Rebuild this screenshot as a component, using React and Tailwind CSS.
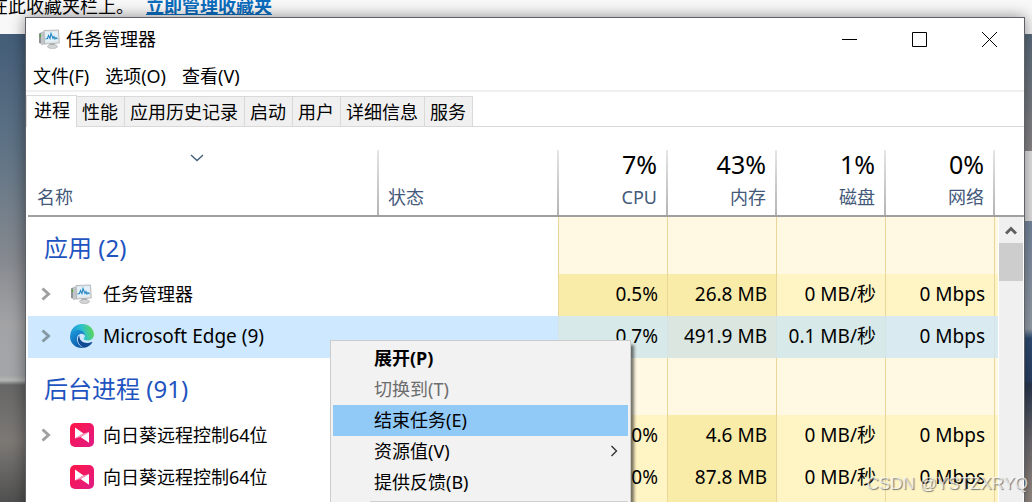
import React from 'react';
import clsx from 'clsx';

const tabs = ['进程', '性能', '应用历史记录', '启动', '用户', '详细信息', '服务'];

const columns = [
  { label: 'CPU', usage: '7%' },
  { label: '内存', usage: '43%' },
  { label: '磁盘', usage: '1%' },
  { label: '网络', usage: '0%' },
];

const LOW = 'bg-[#fff4c4]';
const MID = 'bg-[#f9eca8]';

const groups = [
  {
    title: '应用 (2)',
    rows: [
      { name: '任务管理器', icon: 'taskmgr', expandable: true, values: ['0.5%', '26.8 MB', '0 MB/秒', '0 Mbps'], heat: [MID, MID, LOW, LOW] },
      {
        name: 'Microsoft Edge (9)',
        icon: 'edge',
        expandable: true,
        selected: true,
        nameClass: 'text-[19px]',
        values: ['0.7%', '491.9 MB', '0.1 MB/秒', '0 Mbps'],
        heat: ['bg-[#d7e9e8]', 'bg-[#dae6df]', 'bg-[#d7e9e8]', 'bg-[#d9eaf0]'],
      },
    ],
  },
  {
    title: '后台进程 (91)',
    rows: [
      { name: '向日葵远程控制64位', icon: 'sunlogin', expandable: true, values: ['0%', '4.6 MB', '0 MB/秒', '0 Mbps'], heat: [LOW, MID, LOW, LOW] },
      { name: '向日葵远程控制64位', icon: 'sunlogin', values: ['0%', '87.8 MB', '0 MB/秒', '0 Mbps'], heat: [LOW, MID, LOW, LOW] },
      { name: '', values: ['', '', '', ''], heat: [LOW, MID, LOW, LOW] },
    ],
  },
];

const menuItems = [
  { label: '展开(P)', className: 'font-bold' },
  { label: '切换到(T)', className: 'text-[#6d6d6d]', disabled: true },
  { label: '结束任务(E)', className: 'bg-[#91c9f7]' },
  { label: '资源值(V)', submenu: true },
  { label: '提供反馈(B)' },
];

function TaskManagerIcon() {
  return (
    <svg viewBox="0 0 22 20" className="h-5 w-[22px] shrink-0">
      <path d="M1 4.500l4-2v13l-4-1.500z" fill="#8f9396" />
      <path d="M3 3.500l4-1.500v13.500l-4 .5z" fill="#c3c6c8" />
      <path d="M1.500 5.500h1.500v2.500H1.500z" fill="#4fa83d" />
      <path d="M6 1.500L20.500 1l.8 13L6.500 15z" fill="#e3e5e6" stroke="#a9adb0" strokeWidth=".8" />
      <path d="M7.300 3l12-.5.6 9.500-12.300 1z" fill="#e2f1fa" />
      <path d="M7.500 10l2-.5 1-3 1.500 3 1-5 2 5 1-2 1 2.500 1-1.500 1.500 1.500" fill="none" stroke="#2887c2" strokeWidth="1.100" />
      <path d="M11.500 14.800l5-.4.500 2.400h-5z" fill="#9b9fa2" />
      <ellipse cx="14.500" cy="17.500" rx="5" ry="2" fill="#d3d5d7" stroke="#a4a8ab" strokeWidth=".6" />
    </svg>
  );
}

function EdgeIcon() {
  return (
    <svg viewBox="0 0 24 24" className="size-6 shrink-0">
      <defs>
        <linearGradient id="edge-top" x1="0" y1=".5" x2="1" y2=".3">
          <stop offset="0" stopColor="#1a8fd8" />
          <stop offset=".5" stopColor="#2bbfd0" />
          <stop offset="1" stopColor="#62d94e" />
        </linearGradient>
        <linearGradient id="edge-body" x1="0" y1="0" x2=".5" y2="1">
          <stop offset="0" stopColor="#1e9de0" />
          <stop offset="1" stopColor="#0b5cab" />
        </linearGradient>
      </defs>
      <path d="M.2 11C.9 4.600 6 0 12 0c6.800 0 12 4.800 12 10.600 0 3.400-2.700 6-6.200 6-3.300 0-4.500-1.200-4.100-2 .8-1 1.100-1.700 1.100-2.700C14.800 8.900 11.900 7 8 7 4 7 1 9 .2 11z" fill="url(#edge-top)" />
      <path d="M.1 12C.4 8.300 4 6 8 6c4.200 0 6.800 2.700 6.800 5.700-.8-1.400-2.100-2-3.300-2C8.800 9.700 7 12 7 15c0 4.200 3.300 8.300 7.500 8.700C6.500 25.200-.5 19.500.1 12z" fill="url(#edge-body)" />
      <path d="M9.300 11.200C6.500 14.500 8 21.500 14 23.800c3.500-.3 6.700-2.500 8.300-5.200.3-.5-.1-.8-.6-.6-5.200 2.300-12.700.5-12.400-6.800z" fill="#114a94" />
    </svg>
  );
}

function SunloginIcon() {
  return (
    <svg viewBox="0 0 24 24" className="size-6 shrink-0">
      <defs>
        <linearGradient id="sun" x1="0" y1="0" x2="1" y2="1">
          <stop offset="0" stopColor="#ff1645" />
          <stop offset="1" stopColor="#e01b86" />
        </linearGradient>
      </defs>
      <rect width="24" height="24" rx="5" fill="url(#sun)" />
      <path d="M5 4.500l8.500 6L5 15.500z" fill="#fff" />
      <path d="M19 9v10.800L10.500 14z" fill="#fff" />
      <path d="M5 15.500l8.500-5L19 9l-8.500 5z" fill="#f9a5c0" />
    </svg>
  );
}

const icons = { taskmgr: TaskManagerIcon, edge: EdgeIcon, sunlogin: SunloginIcon };

function TitleBar() {
  return (
    <header className="flex h-11 items-center pb-0.5">
      <div className="flex flex-1 items-center gap-1.5 pl-3">
        <TaskManagerIcon />
        <h1>任务管理器</h1>
      </div>
      <button aria-label="最小化" className="flex h-full w-[70px] items-center justify-center">
        <svg viewBox="0 0 15 15" className="size-[15px]" stroke="#000" fill="none"><path d="M0 7.500h15" /></svg>
      </button>
      <button aria-label="最大化" className="flex h-full w-[70px] items-center justify-center">
        <svg viewBox="0 0 15 15" className="size-[15px]" stroke="#000" fill="none"><path d="M.5.5h14v14H.5z" /></svg>
      </button>
      <button aria-label="关闭" className="flex h-full w-[70px] items-center justify-center">
        <svg viewBox="0 0 15 15" className="size-[15px]" stroke="#000" fill="none"><path d="M0 0l15 15M15 0L0 15" /></svg>
      </button>
    </header>
  );
}

function HeaderLine() {
  return <div className="w-0.5 self-stretch bg-linear-to-b from-[#e6e6e6] to-[#b4b4b4]" />;
}

function ProcessRow({ row }) {
  const Icon = icons[row.icon];
  const line = row.selected ? 'border-[#d5e3e6]' : 'border-[#ead59b]';

  return (
    <tr className={clsx('h-[42px]', row.selected && 'bg-[#cde8ff]')}>
      <td className="p-0 pb-0.5">
        <div className="flex items-center pl-[13px]">
          {row.expandable ? (
            <button aria-label={`展开 ${row.name}`} className="w-[29px]">
              <svg viewBox="0 0 10 14" className={clsx('h-3.5 w-2.5', row.selected ? 'text-[#8798a5]' : 'text-[#a0a0a0]')}>
                <path d="M1.500 1.500L7.500 7l-6 5.500" fill="none" stroke="currentColor" strokeWidth="3" />
              </svg>
            </button>
          ) : (
            <span className="w-[29px]" />
          )}
          <span className="flex w-[33px] items-center">{Icon && <Icon />}</span>
          <span className={row.nameClass}>{row.name}</span>
        </div>
      </td>
      <td className={clsx('border-r p-0', line)} />
      {row.values.map((value, i) => (
        <td key={i} className={clsx('border-r p-0 pr-[9px] pb-0.5 text-right text-[19px]', row.heat[i], line)}>{value}</td>
      ))}
      <td className={clsx('p-0', row.heat[3])} />
    </tr>
  );
}

function ProcessTable() {
  return (
    <table className="w-full table-fixed border-separate border-spacing-0 whitespace-nowrap">
      <colgroup>
        <col />
        <col className="w-[180px]" />
        <col className="w-[109px]" />
        <col className="w-[109px]" />
        <col className="w-[109px]" />
        <col className="w-[109px]" />
        <col className="w-[3px]" />
        <col className="w-[26px]" />
      </colgroup>
      <thead>
        <tr className="text-[#44597a]">
          <th className="border-b-2 border-[#a0a0a0] p-0 text-left font-normal">
            <div className="flex h-[65px]">
              <div className="flex flex-1 flex-col justify-between pb-1 pl-[9px]">
                <svg viewBox="0 0 14 8" className="mt-1 mr-5 h-2 w-3.5 self-center">
                  <path d="M1 1l6 5.500L13 1" fill="none" stroke="#44607a" strokeWidth="1.400" />
                </svg>
                名称
              </div>
              <HeaderLine />
            </div>
          </th>
          <th className="border-b-2 border-[#a0a0a0] p-0 text-left font-normal">
            <div className="flex h-[65px]">
              <div className="flex flex-1 items-end pb-1 pl-[9px]">状态</div>
              <HeaderLine />
            </div>
          </th>
          {columns.map((col) => (
            <th key={col.label} className="border-b-2 border-[#a0a0a0] p-0 text-right font-normal">
              <div className="flex h-[65px]">
                <div className="flex flex-1 flex-col justify-between pr-[9px] pb-1">
                  <span className="text-[25px] leading-7 text-black">{col.usage}</span>
                  {col.label}
                </div>
                <HeaderLine />
              </div>
            </th>
          ))}
          <th className="border-b-2 border-[#a0a0a0] p-0" colSpan={2} />
        </tr>
      </thead>
      <tbody>
        {groups.map((group, g) => (
          <React.Fragment key={group.title}>
            <tr className="h-[57px]">
              <td className="p-0 pt-1 pl-4 text-2xl leading-7 text-[#1f54c0]">{group.title}</td>
              <td className="border-r border-[#ead59b] p-0" />
              {columns.map((col) => (
                <td key={col.label} className="border-r border-[#ead59b] bg-[#fff9e4] p-0" />
              ))}
              <td className="bg-[#fff9e4] p-0" />
              {/* scrollbar column spans every body row */}
              {g === 0 && (
                <td rowSpan={7} className="border-x border-white bg-[#f0f0f0] p-0 align-top">
                  <button aria-label="向上滚动" className="flex h-[26px] w-full items-center justify-center">
                    <svg viewBox="0 0 12 10" className="h-2.5 w-3">
                      <path d="M1 8.500l5-5 5 5" fill="none" stroke="#606060" strokeWidth="3" />
                    </svg>
                  </button>
                  <div className="h-[38px] bg-[#cdcdcd]" />
                </td>
              )}
            </tr>
            {group.rows.map((row, i) => (
              <ProcessRow key={i} row={row} />
            ))}
          </React.Fragment>
        ))}
      </tbody>
    </table>
  );
}

function ContextMenu() {
  return (
    <div
      role="menu"
      className="absolute top-[322px] left-[304px] w-[301px] border border-[#ccc] bg-[#f2f2f2] p-0.5 shadow-[4px_4px_3px_-1px_rgba(0,0,0,0.55)]"
    >
      {menuItems.map((item) => (
        <button
          key={item.label}
          role="menuitem"
          disabled={item.disabled}
          className={clsx('flex h-[31px] w-full items-center justify-between pr-2.5 pb-0.5 pl-[41px]', item.className)}
        >
          {item.label}
          {item.submenu && (
            <svg viewBox="0 0 8 12" className="h-3 w-2">
              <path d="M1.500 1l5 5-5 5" fill="none" stroke="#333" strokeWidth="1.400" />
            </svg>
          )}
        </button>
      ))}
      <hr className="mt-[3px] mb-4 ml-[37px] border-[#d0d0d0]" />
    </div>
  );
}

export default function App() {
  return (
    <div className="relative flex h-screen flex-col overflow-hidden bg-[#777] font-['Noto_Sans','Noto_Sans_CJK_SC',sans-serif] text-lg leading-7 text-black">
      {/* Browser page behind the window */}
      <div className="flex h-[34px] shrink-0 items-start gap-3 bg-[#f8f8f8] whitespace-nowrap">
        <p className="-mt-2 -ml-2.5">在此收藏夹栏上。</p>
        <a href="#favorites" className="-mt-2 font-bold text-[#0a6cbd] underline">立即管理收藏夹</a>
      </div>
      <div className="flex flex-1 justify-between">
        <div className="w-[30px] bg-[linear-gradient(#435d78,#5f7385_25%,#85898f_48%,#a3a3a6_62%,#a3a6a8_73%,#b5b5b5_74%,#666_75%,#7c7975_87%,#505050)]" />
        <div className="w-[30px] bg-[linear-gradient(#5b6c7d,#8b8788_25%,#e4e4e4_25%,#e4e4e4_40%,#7788a0_40%,#98a2ad_63%,#2f4e77_65%,#2b4266_74%,#2a3850_75%,#6d6b70_87%,#9a8f88)]" />
      </div>

      <main className="absolute top-[17px] right-[7px] -bottom-10 left-[25px] border border-[#5f6266] bg-white shadow-[0_0_14px_rgba(0,0,0,0.45)]">
        <div className="h-full overflow-hidden">
          <TitleBar />
          <nav className="flex h-[30px] items-center gap-4 border-b-2 border-[#f0f0f0] pl-[7px]">
            <button>文件(F)</button>
            <button>选项(O)</button>
            <button>查看(V)</button>
          </nav>
          <div role="tablist" className="mt-[3px] flex h-8 items-end border-b border-[#d9d9d9]">
            {tabs.map((tab, i) => (
              <button
                key={tab}
                role="tab"
                aria-selected={i === 0}
                className={clsx(
                  'border-t border-r border-[#d9d9d9] whitespace-nowrap',
                  i === 0 ? '-mb-px h-8 border-l bg-white pr-1.5 pb-1 pl-[7px]' : 'h-[30px] bg-[#f0f0f0] pr-1.5 pl-[5px]'
                )}
              >
                {tab}
              </button>
            ))}
          </div>
          <div className="mt-[23px] ml-0.5">
            <ProcessTable />
          </div>
        </div>
        <ContextMenu />
      </main>

      <p className="absolute right-1 bottom-1 font-['Liberation_Sans',sans-serif] text-[17px] text-white/70 [text-shadow:1px_1px_1px_rgba(90,90,90,0.8)]">
        CSDN @YSTZXRYQ
      </p>
    </div>
  );
}
